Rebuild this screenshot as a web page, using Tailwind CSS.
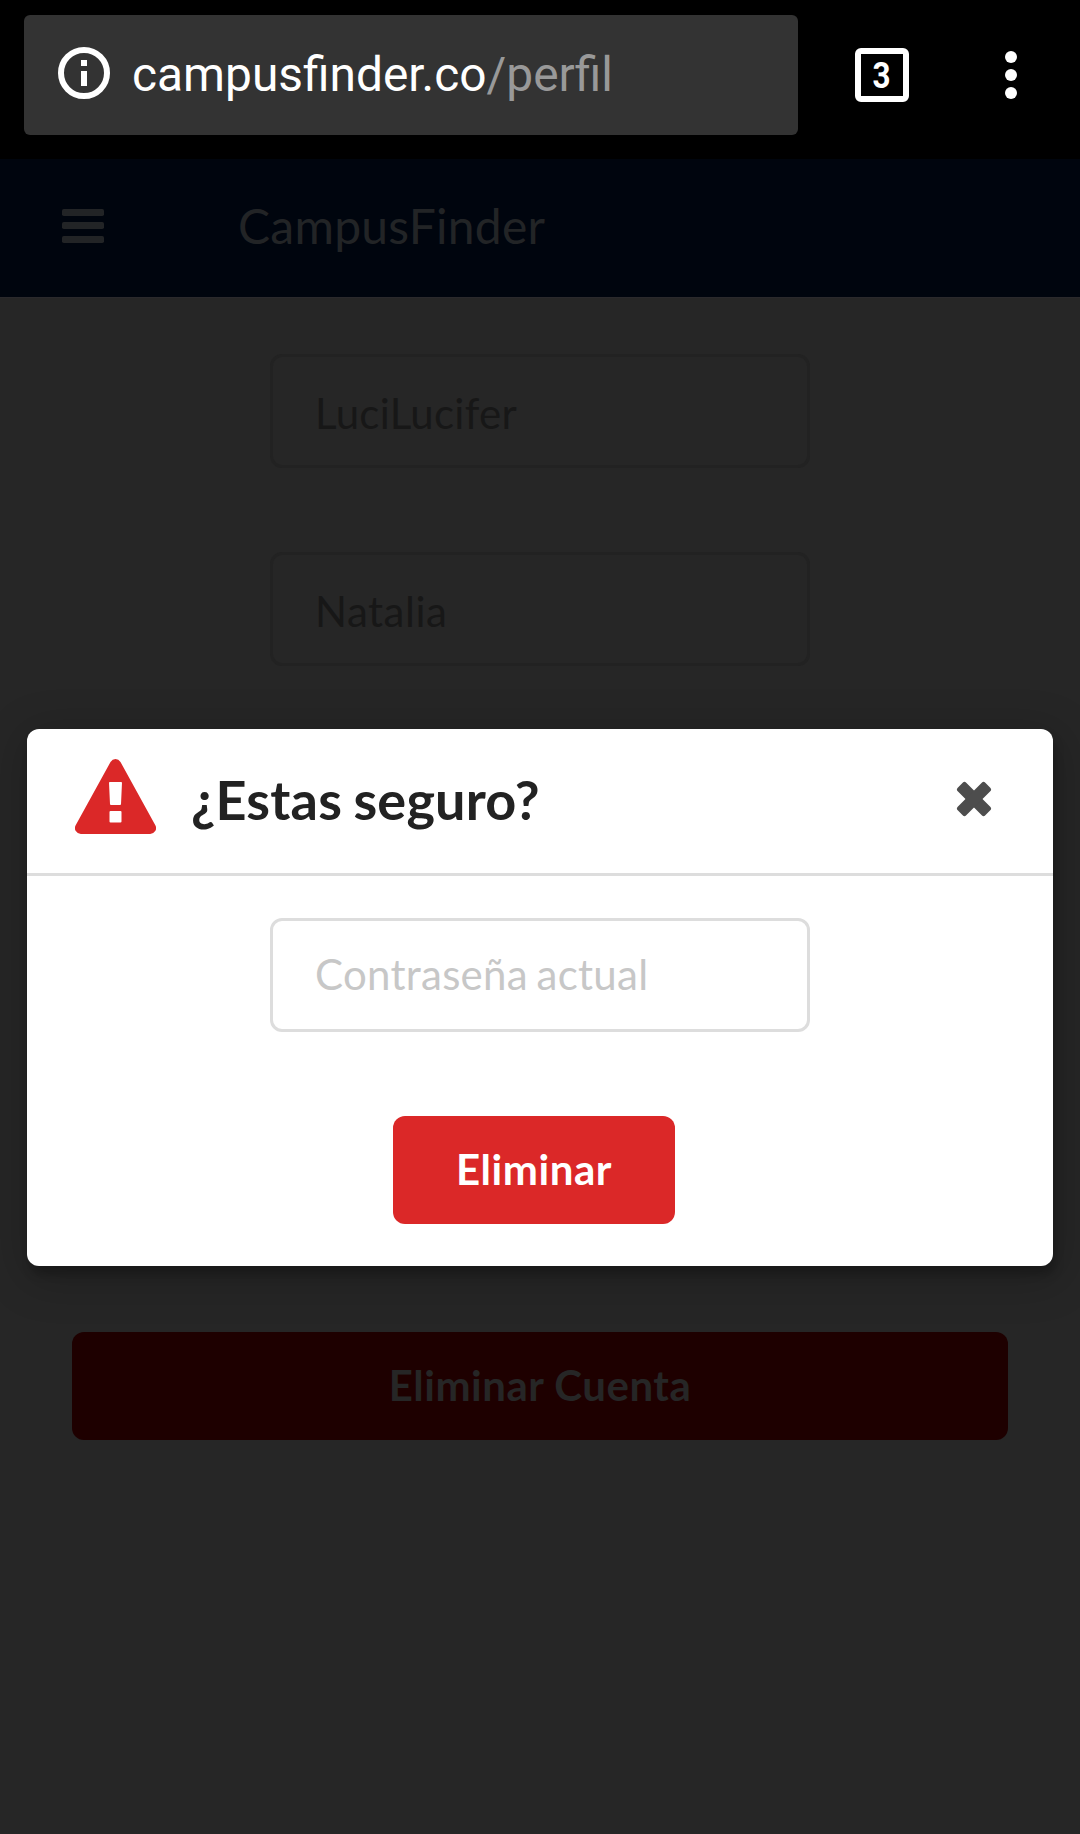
<!DOCTYPE html>
<html lang="es">
<head>
<meta charset="utf-8">
<title>CampusFinder</title>
<script src="https://cdn.jsdelivr.net/npm/@tailwindcss/browser@4"></script>
</head>
<body class="relative h-[1834px] w-[1080px] overflow-hidden bg-[#262626] font-['Lato',sans-serif] text-[42px]">
  <!-- Browser bar -->
  <header class="flex h-[159px] items-start bg-black pt-[15px] pl-6 font-['Roboto',sans-serif]">
    <div class="flex h-[120px] w-[774px] items-center rounded-[6px] bg-[#333333] pl-[34px]">
      <svg class="mb-[4px] size-[52px]" viewBox="0 0 52 52"><circle cx="26" cy="26" r="23" fill="none" stroke="#fff" stroke-width="6"/><path fill="#fff" d="M23 13h6v6h-6zM23 24h6v15h-6z"/></svg>
      <div class="ml-[22px] text-[47.85px] leading-[56px] text-white">campusfinder.co<span class="text-[#999999]">/perfil</span></div>
    </div>
    <div class="mt-[33px] ml-[57px] flex size-[54px] items-center justify-center rounded-[6px] border-6 border-white text-[37px] leading-none font-bold text-white"><span class="scale-x-85">3</span></div>
    <div class="mt-9 ml-24 flex flex-col gap-[6px]">
      <i class="size-3 rounded-full bg-white"></i><i class="size-3 rounded-full bg-white"></i><i class="size-3 rounded-full bg-white"></i>
    </div>
  </header>

  <!-- Site navigation -->
  <nav class="flex h-[138px] items-center bg-[#00050e] pl-[62px] text-[#222426]">
    <svg class="mb-[4px] h-[34px] w-[42px]" viewBox="0 0 42 34" fill="currentColor"><rect width="42" height="7" rx="1.8"/><rect y="13" width="42" height="7" rx="1.8"/><rect y="27" width="42" height="7" rx="1.8"/></svg>
    <div class="mb-[5px] ml-[134px] text-[48px] leading-[60px] tracking-[0.25px]">CampusFinder</div>
  </nav>

  <!-- Profile form -->
  <main class="flex flex-col items-center border-t border-[#2a292c] pt-14 text-[#171717]">
    <div class="flex h-[114px] w-[540px] items-center rounded-[12px] border-3 border-[#222222] pt-1 pl-[42px] tracking-[0.27px]">LuciLucifer</div>
    <div class="mt-[84px] flex h-[114px] w-[540px] items-center rounded-[12px] border-3 border-[#222222] pt-1 pl-[42px] tracking-[0.5px]">Natalia</div>
    <button class="mt-[666px] h-[108px] w-[936px] rounded-[12px] bg-[#1e0000] pb-[2px] font-bold tracking-[0.5px] text-[#262626]">Eliminar Cuenta</button>
  </main>

  <!-- Confirmation modal -->
  <section class="absolute top-[729px] left-[27px] flex h-[537px] w-[1026px] flex-col rounded-[12px] bg-white shadow-[3px_9px_9px_0_rgba(0,0,0,0.2),3px_9px_45px_6px_rgba(0,0,0,0.2)]">
    <div class="flex h-[147px] items-center border-b-3 border-[#dddddd] pr-[61px] pl-12">
      <svg class="mb-[9px] h-[75px] w-[81px]" viewBox="0 0 81 75"><path fill="#db2828" fill-rule="evenodd" d="M35.500 3Q37.400 0 40.500 0T45.500 3L80.200 66Q82 69.200 80.200 72.100T75.200 75H5.800Q2.600 75 .8 72.100T.8 66ZM34 23.500L35 45.200Q35.200 46 36 46H45Q45.900 46 46 45.200L47 23.500Q46.800 23 46 23H35Q34 23 34 23.500ZM35.500 52Q34.500 52 34.500 53V62.500Q34.500 63.500 35.500 63.500H45.500Q46.500 63.500 46.500 62.500V53Q46.500 52 45.500 52Z"/></svg>
      <h2 class="mb-[3px] ml-[35px] text-[54px] leading-[66px] font-bold tracking-[0.2px] text-[#222222] [word-spacing:-2px]">¿Estas seguro?</h2>
      <svg class="mb-[4px] ml-auto size-[36px]" viewBox="0 0 36 36" fill="#4d4d4d"><rect x="-1.500" y="12" width="39" height="12" rx="2.500" transform="rotate(45 18 18)"/><rect x="-1.500" y="12" width="39" height="12" rx="2.500" transform="rotate(-45 18 18)"/></svg>
    </div>
    <div class="flex flex-col items-center pt-[42px]">
      <input class="h-[114px] w-[540px] rounded-[12px] border-3 border-[#dddddd] px-[42px] pb-[2px] tracking-[0.28px] [word-spacing:-2.5px] placeholder:text-[#c7c7c7]" placeholder="Contraseña actual">
      <button class="mt-[84px] mr-3 h-[108px] w-[282px] rounded-[12px] bg-[#db2828] pb-[2px] font-bold tracking-[0.55px] text-white">Eliminar</button>
    </div>
  </section>
</body>
</html>
